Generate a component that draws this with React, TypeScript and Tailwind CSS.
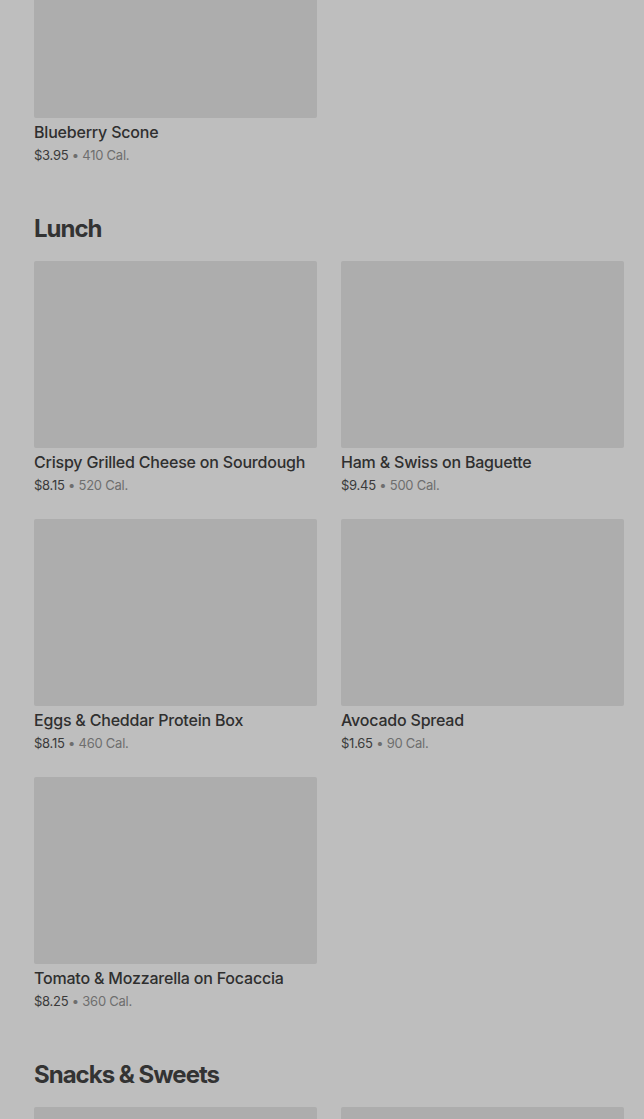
import React from "react";

type Item = { name: string; price: string; cal: string };

const sections: { title?: string; items: Item[]; imagesOnly?: boolean }[] = [
  { items: [{ name: "Blueberry Scone", price: "$3.95", cal: "410 Cal." }] },
  {
    title: "Lunch",
    items: [
      { name: "Crispy Grilled Cheese on Sourdough", price: "$8.15", cal: "520 Cal." },
      { name: "Ham & Swiss on Baguette", price: "$9.45", cal: "500 Cal." },
      { name: "Eggs & Cheddar Protein Box", price: "$8.15", cal: "460 Cal." },
      { name: "Avocado Spread", price: "$1.65", cal: "90 Cal." },
      { name: "Tomato & Mozzarella on Focaccia", price: "$8.25", cal: "360 Cal." },
    ],
  },
  {
    title: "Snacks & Sweets",
    imagesOnly: true,
    items: [
      { name: "snack-1", price: "", cal: "" },
      { name: "snack-2", price: "", cal: "" },
    ],
  },
];

function Card({ item, imageOnly }: { item: Item; imageOnly?: boolean }) {
  return (
    <div className="flex flex-col">
      <div className="h-[187px] w-full rounded-[2px] bg-[#adadad]" />
      {!imageOnly && (
        <>
          <div className="mt-[4px] text-[16px] leading-[20px] font-medium text-[#2f2f2f] tracking-[-0.2px]">
            {item.name}
          </div>
          <div className="mt-[3px] text-[13px] leading-[20px] text-[#3a3a3a] tracking-[-0.25px]">
            {item.price}
            <span className="text-[#6e6e6e]"> • {item.cal}</span>
          </div>
        </>
      )}
    </div>
  );
}

export default function App() {
  return (
    <div
      className="h-[1119px] w-[644px] overflow-hidden bg-[#bebebe]"
      style={{ fontFamily: "Inter, 'Noto Sans', sans-serif" }}
    >
      <div className="-mt-[69px] pl-[34px] pr-[20px]">
        {sections.map((s, i) => (
          <div key={i} className={i === 0 ? "" : "mt-[47px]"}>
            {s.title && (
              <h2 className="mb-[17px] text-[24px] leading-[32px] font-bold text-[#333333] tracking-[-1px] translate-y-[1px]">
                {s.title}
              </h2>
            )}
            <div className="grid grid-cols-2 gap-x-[24px] gap-y-[24px]">
              {s.items.map((it) => (
                <Card key={it.name} item={it} imageOnly={s.imagesOnly} />
              ))}
            </div>
          </div>
        ))}
      </div>
    </div>
  );
}
